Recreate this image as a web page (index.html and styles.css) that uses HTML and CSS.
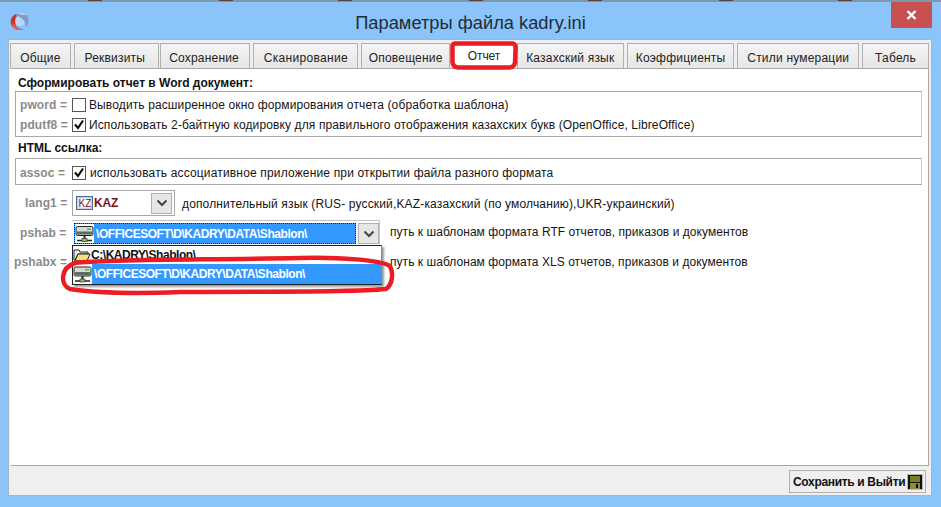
FILE: index.html
```html
<!DOCTYPE html>
<html lang="ru">
<head>
<meta charset="utf-8">
<title>Параметры файла kadry.ini</title>
<link rel="stylesheet" href="styles.css">
</head>
<body>
<div class="window">
  <div class="topline"></div>
  <header class="titlebar">
    <svg class="appicon" width="22" height="22" viewBox="0 0 22 22"><circle cx="11" cy="11" r="5" fill="#b9d8f4"/><path d="M7 4.500C11 1.500 17 3 19 7.500c1.500 3.500 0 7-2 9.500-.5-3-1-5-3-7.500C12 7.500 9 6.500 7 4.500z" fill="#7f9cc4"/><path d="M9 3c3-1 6 0 8 2-3 0-6 0-8-2z" fill="#c3d0e2"/><path d="M6.500 4C2.500 6 .5 11 2.500 15.500c2 4 7.500 6 12.500 3.500-4 .5-7-1-8.500-4C5.500 12 6 8 8 6z" fill="#c9362b"/><path d="M3.500 12c1 4 5 7 10 7.500-4 1.500-8 0-10-3z" fill="#e8695a"/></svg>
    <h1 class="title">Параметры файла kadry.ini</h1>
    <button class="close" aria-label="Закрыть"><svg width="11" height="10" viewBox="0 0 11 10"><path d="M1.500 1l8 8M9.500 1l-8 8" stroke="#fff" stroke-width="2.400"/></svg></button>
  </header>
  <div class="client">
    <nav class="tabs">
      <span class="tab w1">Общие</span>
      <span class="tab w2">Реквизиты</span>
      <span class="tab w3">Сохранение</span>
      <span class="tab w4">Сканирование</span>
      <span class="tab w5">Оповещение</span>
      <span class="tab w6 active">Отчет</span>
      <span class="tab w7">Казахский язык</span>
      <span class="tab w8">Коэффициенты</span>
      <span class="tab w9">Стили нумерации</span>
      <span class="tab w10">Табель</span>
    </nav>
    <main class="panel">
      <h2 class="heading">Сформировать отчет в Word документ:</h2>
      <section class="group">
        <div class="row">
          <span class="key k1">pword =</span><span class="cb"></span>
          <span class="txt">Выводить расширенное окно формирования отчета (обработка шаблона)</span>
        </div>
        <div class="row">
          <span class="key k1">pdutf8 =</span><span class="cb on"><svg width="12" height="12" viewBox="0 0 12 12"><path d="M2 5.500l3 3.500 5-7.500" fill="none" stroke="#111" stroke-width="2.200"/></svg></span>
          <span class="txt">Использовать 2-байтную кодировку для правильного отображения казахских букв (OpenOffice, LibreOffice)</span>
        </div>
      </section>
      <h2 class="heading h2">HTML ссылка:</h2>
      <section class="group single">
        <div class="row">
          <span class="key k1">assoc =</span><span class="cb on"><svg width="12" height="12" viewBox="0 0 12 12"><path d="M2 5.500l3 3.500 5-7.500" fill="none" stroke="#111" stroke-width="2.200"/></svg></span>
          <span class="txt t-assoc">использовать ассоциативное приложение при открытии файла разного формата</span>
        </div>
      </section>
      <div class="field lang">
        <span class="key k2">lang1 =</span>
        <div class="combo c-lang">
          <svg class="flag" width="17" height="14" viewBox="0 0 17 14"><rect x=".5" y=".5" width="16" height="13" fill="#cfe0f2" stroke="#3b6ea8"/><rect x="2" y="2" width="13" height="10" fill="#fff" stroke="#d8a8a8" stroke-width=".6"/><text x="2.500" y="10.800" font-family="Liberation Sans" font-size="10" fill="#7a1010">KZ</text></svg>
          <span class="kaz">KAZ</span>
          <span class="arrow"><svg width="12" height="8" viewBox="0 0 12 8"><path d="M1.500 1.500l4.500 4.500 4.500-4.500" fill="none" stroke="#444" stroke-width="2"/></svg></span>
        </div>
        <span class="txt note n1">дополнительный язык (RUS- русский,KAZ-казахский (по умолчанию),UKR-украинский)</span>
      </div>
      <div class="field pshab">
        <span class="key k3">pshab =</span>
        <div class="combo c-path">
          <div class="sel">
            <svg class="net" width="19" height="18" viewBox="0 0 19 18"><rect x="1" y="2" width="17" height="9" rx="1.500" fill="#d5dbd5" stroke="#222"/><rect x="2" y="7" width="15" height="3" fill="#5f6b5f"/><rect x="12" y="4" width="4" height="1.500" fill="#3c3"/><path d="M2 16h15" stroke="#222" stroke-width="1.500"/><path d="M9.500 11v3" stroke="#222" stroke-width="2"/><rect x="7" y="14" width="5" height="3" fill="#8bc34a" stroke="#222" stroke-width=".6"/></svg>
            <span class="path">\OFFICESOFT\D\KADRY\DATA\Shablon\</span>
          </div>
          <span class="arrow"><svg width="12" height="8" viewBox="0 0 12 8"><path d="M1.500 1.500l4.500 4.500 4.500-4.500" fill="none" stroke="#444" stroke-width="2"/></svg></span>
        </div>
        <span class="txt note n2">путь к шаблонам формата RTF отчетов, приказов и документов</span>
      </div>
      <div class="field pshabx">
        <span class="key k4">pshabx =</span>
        <span class="txt note n3">путь к шаблонам формата XLS отчетов, приказов и документов</span>
      </div>
      <div class="dropdown">
        <div class="opt">
          <svg width="18" height="14" viewBox="0 0 18 14"><path d="M1 2h5l1 2h8v2H5L2 12H1z" fill="#eee" stroke="#222"/><path d="M5 6h12l-3 7H2z" fill="#f2e27a" stroke="#222"/></svg>
          <span class="path">C:\KADRY\Shablon\</span>
        </div>
        <div class="opt hi">
          <svg class="net" width="19" height="18" viewBox="0 0 19 18"><rect x="1" y="2" width="17" height="9" rx="1.500" fill="#d5dbd5" stroke="#222"/><rect x="2" y="7" width="15" height="3" fill="#5f6b5f"/><rect x="12" y="4" width="4" height="1.500" fill="#3c3"/><path d="M2 16h15" stroke="#222" stroke-width="1.500"/><path d="M9.500 11v3" stroke="#222" stroke-width="2"/><rect x="7" y="14" width="5" height="3" fill="#8bc34a" stroke="#222" stroke-width=".6"/></svg>
          <span class="path lab">\OFFICESOFT\D\KADRY\DATA\Shablon\</span>
        </div>
      </div>
    </main>
    <footer class="footer">
      <button class="save">Сохранить и Выйти<svg width="16" height="16" viewBox="0 0 16 16"><rect width="16" height="16" fill="#b8b8b8"/><rect x="1" y="1" width="14" height="14" fill="#111"/><rect x="3" y="2" width="10" height="6" fill="#7d7d1e"/><rect x="3" y="9" width="10" height="6" fill="#8c8c3a"/><rect x="9" y="10" width="2" height="4" fill="#111"/></svg></button>
    </footer>
  </div>
</div>
<svg class="marks" width="941" height="507" viewBox="0 0 941 507" aria-hidden="true">
  <path d="M454 43.500 H513 Q516 44 515.500 50 L515 63 Q514 67 510 67.500 H458 Q453 67 452.500 62 L452.500 46 Q452.500 43.500 456 43.500Z" fill="none" stroke="#ed1c24" stroke-width="4.500"/>
  <path d="M75 263 C110 259 200 260 300 258 C340 257 380 260 390 266 C394 274 392 285 386 289 C340 293 250 291 180 292 C130 294 90 292 70 289 C60 285 60 268 75 263Z" fill="none" stroke="#ed1c24" stroke-width="4.500"/>
</svg>
</body>
</html>
```
FILE: styles.css
```css
* { box-sizing: border-box; }
html, body { margin: 0; padding: 0; }
body { width: 941px; height: 507px; overflow: hidden; position: relative; background: #8ac4fb; font-family: "Liberation Sans", Arial, sans-serif; font-size: 12px; color: #111; }
.window { width: 941px; height: 507px; display: flex; flex-direction: column; }
.topline { height: 2px; background-color: #7f97ad; background-image: repeating-linear-gradient(90deg, transparent 0 88px, #5e4034 88px 102px, transparent 102px 250px), repeating-linear-gradient(90deg, transparent 0 219px, #5e4034 219px 233px, transparent 233px 250px); background-size: 100% 1px; background-repeat: no-repeat; }
.titlebar { height: 37px; display: flex; align-items: center; position: relative; }
.appicon { position: absolute; left: 9px; top: 8px; }
.title { flex: 1; margin: 0; text-align: center; font-weight: normal; font-size: 18.300px; color: #222c38; padding-top: 4px; }
.close { position: absolute; right: 9px; top: 0; width: 41px; height: 26px; border: 0; background: #c75050; padding: 0; display: flex; align-items: center; justify-content: center; }
.client { margin: 0 9px 0 8px; height: 457px; background: #efefef; border: 1px solid #a5b6c6; display: flex; flex-direction: column; padding: 3px 2px 0 1px; }
.tabs { display: flex; height: 25px; align-items: flex-end; }
.tab { height: 25px; border: 1px solid #b0b0b0; border-bottom: 0; background: linear-gradient(#f4f4f4, #e6e6e6); margin-right: 3px; display: flex; align-items: center; justify-content: center; padding: 3px 2px 0 0; color: #222; letter-spacing: .2px; }
.w1 { width: 61px; padding-right: 0; } .w2 { width: 85px; margin-right: 1px; padding-right: 3px; } .w3 { width: 91px; } .w4 { width: 105px; padding-right: 0; letter-spacing: .3px; } .w5 { width: 89px; padding-left: 2px; }
.w6 { width: 64px; margin-right: 0; } .w7 { width: 107px; padding-right: 0; } .w8 { width: 108px; padding-right: 0; } .w9 { width: 122px; padding-right: 0; } .w10 { width: 67px; margin-right: 0; padding-right: 0; }
.active { height: 27px; background: #fff; border-color: #fff; padding-top: 1px; position: relative; z-index: 1; letter-spacing: -.05px; }
.panel { height: 398px; background: #fff; border: 1px solid #a8a8a8; border-left-color: #fff; position: relative; padding: 7px 0 0 4px; }
.heading { margin: 0 0 0 3px; font-size: 12px; font-weight: bold; color: #111; line-height: 15px; }
.h2 { margin-top: 4px; }
.group { width: 907px; height: 46px; border: 1px solid #a8a8a8; border-right-color: #ccc; padding: 3px 0 0 4px; }
.single { height: 27px; margin-top: 2px; padding-top: 4px; }
.row { height: 20px; display: flex; align-items: center; }
.key { color: #8a8a8a; font-weight: bold; white-space: nowrap; letter-spacing: .1px; }
.k1 { width: 52px; }
.cb { width: 14px; height: 14px; border: 1px solid #555; background: #fff; margin-right: 3px; display: block; flex: none; }
.cb svg { display: block; }
.txt { letter-spacing: .12px; white-space: nowrap; color: #151515; }
.t-assoc { letter-spacing: .16px; margin-left: 1px; }
.field { display: flex; align-items: center; position: relative; }
.k2 { width: 57px; padding-left: 10px; }
.k3 { width: 57px; padding-left: 5px; }
.k4 { width: 58px; margin-left: -1px; }
.lang { height: 26px; margin-top: 5px; }
.pshab { height: 26px; margin-top: 4px; }
.pshabx { height: 20px; margin-top: 6px; }
.combo { display: flex; align-items: center; flex: none; }
.c-lang { width: 103px; height: 26px; border: 1px solid #a8a8a8; padding: 2px; }
.flag { margin-left: 1px; flex: none; }
.kaz { font-weight: bold; color: #7a1212; margin-left: 1px; flex: 1; letter-spacing: -.2px; }
.arrow { width: 21px; height: 21px; background: #e6e6e6; border: 1px solid #b0b0b0; display: flex; align-items: center; justify-content: center; flex: none; }
.note { margin-left: 7px; }
.n1 { margin-top: 1px; letter-spacing: .15px; }
.c-path { width: 308px; height: 24px; border: 1px solid #c4c4c4; border-bottom: 0; border-left: 0; padding: 2px 0 0 2px; align-self: flex-start; }
.sel { flex: 1; height: 21px; margin-right: 2px; background: #3399ff; border: 1px dotted #222; display: flex; align-items: center; }
.sel .net { background: #fff; flex: none; height: 19px; }
.path { font-weight: bold; letter-spacing: -.45px; white-space: nowrap; font-size: 12px; }
.sel .path { color: #fff; margin-left: 2px; }
.n2 { margin-left: 10px; letter-spacing: .05px; margin-top: -2px; }
.n3 { margin-left: 318px; letter-spacing: .05px; }
.dropdown { position: absolute; left: 61px; top: 176px; width: 310px; height: 40px; background: #fff; border: 1px solid #222; border-right-color: #888; box-shadow: 2px 2px 2px rgba(0,0,0,.4); z-index: 2; }
.opt { height: 18px; display: flex; align-items: center; overflow: hidden; }
.opt .path { color: #111; }
.hi { background: #3399ff; height: 20px; }
.hi .net { background: #fff; flex: none; height: 20px; }
.hi .lab { color: #fff; margin-left: 2px; }
.footer { height: 29px; display: flex; justify-content: flex-end; align-items: center; padding: 2px 3px 0 0; }
.save { width: 137px; height: 23px; padding: 0 0 0 3px; border: 1px solid #b0b0b0; background: #efefef; font: bold 12px "Liberation Sans", Arial, sans-serif; letter-spacing: -.33px; color: #111; display: flex; align-items: center; gap: 2px; white-space: nowrap; }
.marks { position: absolute; left: 0; top: 0; z-index: 5; pointer-events: none; }
```
